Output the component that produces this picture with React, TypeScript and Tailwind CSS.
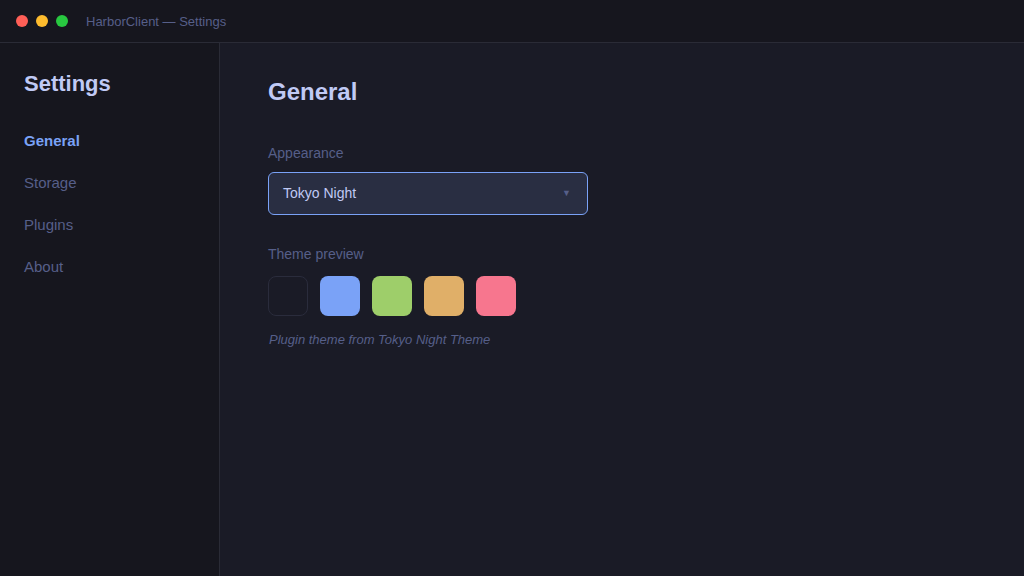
import React from 'react';

const navItems = ['General', 'Storage', 'Plugins', 'About'];
const swatches = ['bg-[#1a1b26] border border-[#2a2c3c]', 'bg-[#7aa2f7]', 'bg-[#9ece6a]', 'bg-[#e0af68]', 'bg-[#f7768e]'];

export default function App() {
  return (
    <div className="h-[576px] w-[1024px] flex flex-col bg-[#1a1b26] font-['Liberation_Sans',Arial,sans-serif] overflow-hidden">
      <div className="h-[43px] shrink-0 flex items-center bg-[#16161e] border-b border-[#2a2b36] pl-4">
        <div className="flex items-center gap-2">
          <span className="w-3 h-3 rounded-full bg-[#ff5f57]" />
          <span className="w-3 h-3 rounded-full bg-[#febc2e]" />
          <span className="w-3 h-3 rounded-full bg-[#28c840]" />
        </div>
        <span className="ml-[18px] mt-px text-[13px] text-[#565f89]">HarborClient — Settings</span>
      </div>

      <div className="flex flex-1 min-h-0">
        <aside className="w-[220px] shrink-0 bg-[#16161e] border-r border-[#2a2b36] px-6 pt-[27px]">
          <h1 className="text-[22px] font-bold text-[#c0caf5] leading-[28px]">Settings</h1>
          <nav className="mt-[22px] flex flex-col">
            {navItems.map((item, i) => (
              <div
                key={item}
                className={`h-[42px] flex items-center text-[15px] ${
                  i === 0 ? 'font-bold text-[#7aa2f7]' : 'text-[#565f89]'
                }`}
              >
                {item}
              </div>
            ))}
          </nav>
        </aside>

        <main className="flex-1 pl-12 pt-[33px]">
          <h2 className="text-[24px] font-bold text-[#c0caf5] leading-[32px]">General</h2>

          <div className="mt-9 text-[14px] text-[#565f89] leading-[18px]">Appearance</div>
          <div className="mt-[10px] w-[320px] h-[43px] rounded-md border border-[#7aa2f7] bg-[#292e42] flex items-center justify-between pl-[14px] pr-4">
            <span className="text-[14px] text-[#c0caf5]">Tokyo Night</span>
            <span className="text-[9px] text-[#565f89]">▼</span>
          </div>

          <div className="mt-[30px] text-[14px] text-[#565f89] leading-[18px]">Theme preview</div>
          <div className="mt-[13px] flex gap-3">
            {swatches.map((cls, i) => (
              <div key={i} className={`w-10 h-10 rounded-lg ${cls}`} />
            ))}
          </div>
          <p className="mt-4 text-[13px] italic text-[#565f89] leading-[16px] pl-px">
            Plugin theme from Tokyo Night Theme
          </p>
        </main>
      </div>
    </div>
  );
}
